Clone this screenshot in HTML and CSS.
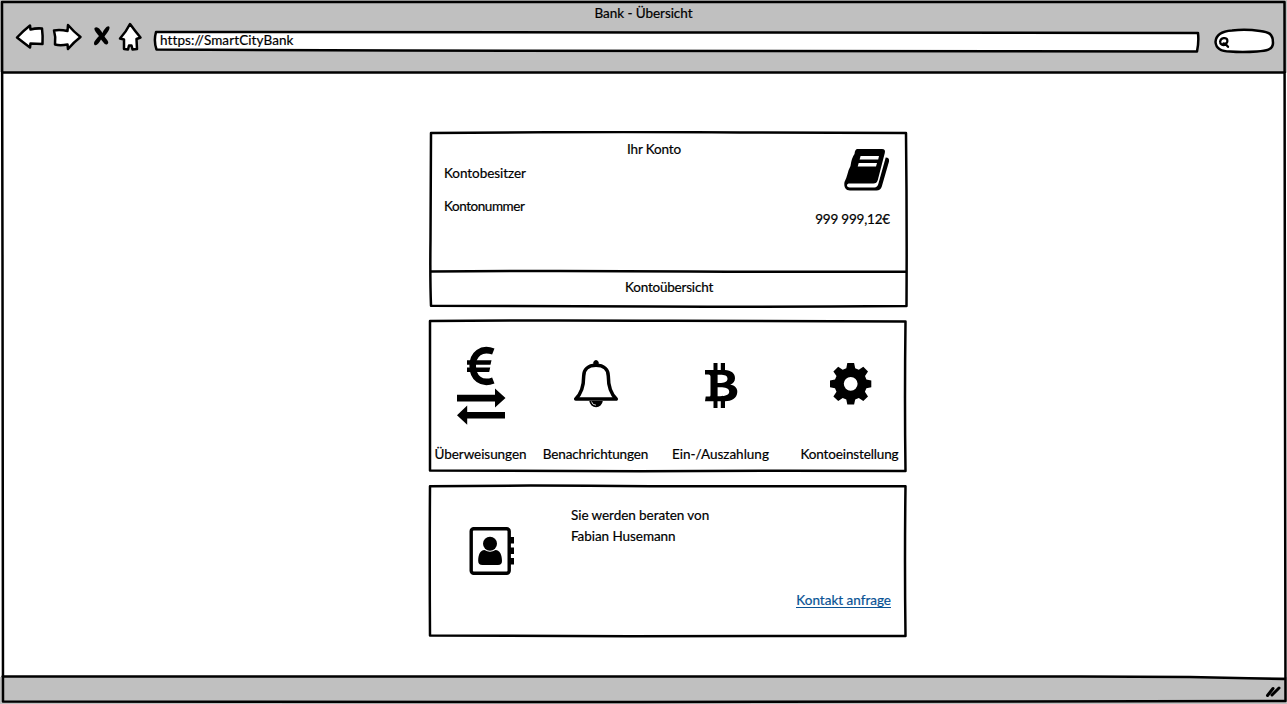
FILE: index.html
```html
<!DOCTYPE html>
<html lang="de">
<head>
<meta charset="utf-8">
<title>Bank - Übersicht</title>
<link rel="stylesheet" href="styles.css">
</head>
<body>
<div class="window">
  <header class="chrome">
    <div class="title"><span class="t-title">Bank - Übersicht</span></div>
    <div class="toolbar">
      <svg class="nav" viewBox="12 20 134 34">
        <g class="sketch white">
          <path d="M17 37.5Q23 31 30 25.500L30.500 29.500Q36 28 42 28.500Q43 36 42.500 44Q36 43.500 30.500 43.500L30 47.500Q24 43 17 37.500Z"/>
          <path d="M54 30.500Q60 29.500 67.500 31L68 25Q74 32 80.500 37Q74 42 68 49L67.500 44.500Q60 46 55 44.500Q56 37 54 30.500Z"/>
          <path d="M130 24Q135 31 140.500 37.500L136.500 39L137 49L132.500 49.500L131.500 45.500L129 45.500L128 49.500L124 49L124 39.500L120 38.500Q126 32 130 24Z"/>
        </g>
        <path d="M94.500 28C98 25.500 101 31 102.500 33C104 29 108 24.500 109.500 27C110 30 106 34 104.500 36.500C106 39 110 42 107.500 44C105 46 103 41.500 101 39.500C99 43 96.500 46.500 94.500 45C92.500 42 97.500 38 99 36C96.500 33 94 30.500 94.500 28Z"/>
      </svg>
      <div class="address">
        <svg class="outline" viewBox="152 29 1049 25"><path class="sketch white" d="M156 32Q400 31.500 650 32.500L1198 33Q1199 42 1197 51.500L1000 51.300Q600 51.200 400 50.500L156.500 49.500Q153.500 41 156 32Z"/></svg>
        <span class="t-url">https://SmartCityBank</span>
      </div>
      <svg class="search" viewBox="1212 27 66 28">
        <path class="sketch white" d="M1215.500 42C1216 34 1224 31 1232 30.500Q1246 29 1260 31C1268 32 1273 33 1273 43C1273 50 1266 51 1257 51.500Q1242 52.500 1230 51.500C1221 51.500 1216 48 1215.500 42Z"/>
        <path class="lens" d="M1226 44.500C1222.500 46 1219.800 44 1220.200 41.500C1220.500 37.500 1226.500 37 1227.300 40C1228 42.800 1225.500 45 1223.500 43.500M1225 43.500L1228 46.800"/>
      </svg>
    </div>
  </header>

  <main class="page">
    <section class="card account">
      <svg class="outline" viewBox="428 131 480 177"><path class="sketch" d="M431 133Q600 131.500 740 132.500L906 133Q907 220 906.500 306Q760 307 650 306.500L431 305.800Q430 280 430.500 240ZM431 271.500Q560 270.500 690 271.500Q800 272 906 271.500"/></svg>
      <div class="account-body">
        <div class="owner"><span class="t-owner">Kontobesitzer</span><span class="t-number">Kontonummer</span></div>
        <div class="heading"><span class="t-heading">Ihr Konto</span></div>
        <div class="balance">
          <svg class="book" viewBox="843 147 48 46">
            <path d="M857.500 149H882Q885.800 149 884.800 153L877.800 180Q876.800 183.500 873.500 183.500H848.500Q846.500 184 847 186Q847.600 187.400 849.500 187.400H874.500Q877.300 187.400 878.300 184L885.700 157.500Q889.700 157.500 889 161.500L881.800 186.500Q880.600 190.500 876.500 190.500H850C846 190.500 843.500 187 844.500 182Q846.500 178 847.500 174Q848.800 169 850.500 166Q851.500 158 854.500 154Q855 149 857.500 149Z"/>
            <path class="page-line" d="M860.600 156H879L878.200 159.600H859.600ZM858.700 163H877L876 166.600H857.700Z"/>
          </svg>
          <span class="t-balance">999 999,12€</span>
        </div>
      </div>
      <div class="account-link"><span class="t-overview">Kontoübersicht</span></div>
    </section>

    <section class="card services">
      <svg class="outline" viewBox="428 319 480 154"><path class="sketch" d="M430 321Q540 320 670 320.800L905.500 321.500Q904.500 400 905.500 471Q760 470.500 640 471.200L430 470.500Q430 390 430 321Z"/></svg>
      <div class="service">
        <svg class="pic" viewBox="450 340 62 92">
          <path class="euro" d="M493.300 351.500C481.500 347 472.700 354 472.700 366C472.700 378 481.500 385 493.300 380.500"/>
          <path d="M467 360.200H491.500L490.500 364.700H467ZM467 367.500H490.200L489.200 372H467Z"/>
          <path d="M457 394.800H495V388.500L505.500 398L495 407.500V401.500H457ZM505 412H467.200V405.500L457 415.200L467.200 424.800V418.500H505Z"/>
        </svg>
        <span class="t-transfer">Überweisungen</span>
      </div>
      <div class="service">
        <svg class="pic" viewBox="565 340 62 92">
          <path d="M593.300 365V362Q596 358 598.700 362V365ZM589.300 401A6.800 7 0 0 0 602.800 401Z"/>
          <path class="bell" d="M575.700 399C581 394 583.700 387 583.700 376C583.700 369.500 588 365.300 596 365.300C604 365.300 608.300 369.500 608.300 376C608.300 387 611 394 616.300 399Z"/>
          <path class="shine" d="M591.500 401.500Q592 405 596 405.200"/>
        </svg>
        <span class="t-notify">Benachrichtungen</span>
      </div>
      <div class="service">
        <svg class="pic" viewBox="690 340 62 92">
          <path fill-rule="evenodd" d="M705 370H713.500V363H717.500V370H720.800V363H725V370C731 370.500 735 373 735 378.200C735 381.500 733 383.500 730.200 384.600C735 385.600 737.500 388.500 737.300 392C737 398.500 731.500 401 725 401.300V408H720.800V401.300H717.500V408H713.500V401.300H705L705.700 396.500H709.500Q710.500 396.500 710.500 395V376.500Q710.500 374.600 708.500 374.600H705ZM717.600 374.800V383C723.500 383.300 727.500 382.200 727.500 378.700C727.500 375 723.500 374.500 717.600 374.800ZM717.600 387.200V396.200C724.500 396.600 729.200 395.500 729.200 391.600C729.200 387.500 724 386.900 717.600 387.200Z"/>
        </svg>
        <span class="t-cash">Ein-/Auszahlung</span>
      </div>
      <div class="service">
        <svg class="pic" viewBox="819 340 62 92">
          <path fill-rule="evenodd" d="M847.300 363H854.100L855.200 368.200L858.800 369.700L863.300 366.700L868 371.400L865 376L866.400 379.400L871.300 380.400V387.200L866.400 388.300L864.900 391.800L868 396.400L863.300 401L858.800 398L855.200 399.400L854.100 404.500H847.300L846.300 399.400L842.700 398L838.200 401L833.400 396.400L836.500 391.800L835 388.300L830 387.200V380.400L835 379.400L836.500 376L833.400 371.400L838.200 366.700L842.700 369.700L846.300 368.200ZM850.700 376.900A6.900 6.900 0 1 0 850.700 390.700A6.900 6.900 0 1 0 850.700 376.900Z"/>
        </svg>
        <span class="t-settings">Kontoeinstellung</span>
      </div>
    </section>

    <section class="card adviser">
      <svg class="outline" viewBox="428 484 480 154"><path class="sketch" d="M430 486.200Q530 485 650 486.300L905.500 486.200Q904.500 560 905.500 636Q760 635.500 630 636.200L430 635.500Q429.500 560 430 486.200Z"/></svg>
      <svg class="contact" viewBox="466 524 52 54">
        <rect class="cover" x="471.200" y="528.700" width="38" height="44.600" rx="2.500"/>
        <path d="M509 537H514V543.500H509ZM509 547.500H514V554H509ZM509 558H514V564.500H509Z"/>
        <circle cx="490" cy="543.800" r="7"/>
        <path d="M484.500 550Q490 553.500 495.500 550C500 550 502 555 502 561Q502 565 498 565H482.500Q478.200 565 478.200 561C478.200 555 480 550 484.500 550Z"/>
      </svg>
      <div class="adviser-text"><span class="t-advice">Sie werden beraten von</span><span class="t-name">Fabian Husemann</span></div>
      <a class="request" href="#"><span class="t-request">Kontakt anfrage</span></a>
    </section>
  </main>

  <footer class="status">
    <svg class="grip" viewBox="1262 682 22 18"><path d="M1267.500 695.500L1273 688.500M1272 695L1279 688"/></svg>
  </footer>

  <svg class="outline" viewBox="0 0 1287 704">
    <path class="sketch" d="M2 2Q500 1.500 1284.500 2Q1285.500 200 1285 400L1285.500 701Q900 703 640 702L3 701.500Q2 500 2.500 260ZM2.500 72.500Q500 71.500 800 72.500L1285 72.500M2.500 676.500Q120 677 240 676.500Q700 675.500 1080 676.500L1190 677L1285 679"/>
  </svg>
</div>
</body>
</html>
```
FILE: styles.css
```css
* { box-sizing: border-box; }
body { margin: 0; background: #fff; font-family: Lato, "Noto Sans", sans-serif; font-size: 13.5px; line-height: 18px; color: #000; }
span { white-space: nowrap; -webkit-text-stroke: .2px currentColor; }
svg { display: block; flex: none; }

.window { position: relative; width: 1287px; height: 704px; display: flex; flex-direction: column; overflow: hidden; }
.outline { position: absolute; inset: 0; width: 100%; height: 100%; pointer-events: none; }
.sketch { fill: none; stroke: #000; stroke-width: 2.5; stroke-linejoin: round; stroke-linecap: round; }
.white { fill: #fff; }

.chrome { height: 72px; background: #c0c0c0; padding-top: 4px; }
.title { display: flex; justify-content: center; height: 16px; }
.toolbar { display: flex; padding-left: 12px; }
.nav { width: 134px; height: 34px; }
.address { position: relative; width: 1049px; height: 25px; margin: 9px 11px 0 6px; padding: 2px 0 0 8px; }
.address span { position: relative; }
.search { width: 66px; height: 28px; margin-top: 7px; }
.lens { fill: none; stroke: #000; stroke-width: 2.3; stroke-linecap: round; }

.t-title { letter-spacing: -.06px; }
.t-url { letter-spacing: .1px; }
.t-heading { letter-spacing: -.15px; }
.t-owner { letter-spacing: -.06px; }
.t-number { letter-spacing: -.45px; }
.t-balance { letter-spacing: -.2px; }
.t-overview { letter-spacing: -.2px; }
.t-transfer { letter-spacing: -.06px; }
.t-notify, .t-settings { letter-spacing: -.13px; }
.t-advice, .t-name { letter-spacing: -.06px; }

.page { flex: 1; padding: 59px 0 0 428px; display: flex; flex-direction: column; gap: 11px; }
.card { position: relative; width: 480px; }

.account { height: 177px; }
.account-body { display: flex; height: 140px; padding: 0 18px 0 16px; }
.owner { width: 183px; display: flex; flex-direction: column; align-items: flex-start; gap: 15px; padding-top: 33px; }
.heading { flex: 1; padding-top: 9px; }
.balance { display: flex; flex-direction: column; align-items: flex-end; gap: 17px; padding-top: 16px; }
.book { width: 48px; height: 46px; margin-right: -1px; }
.page-line { fill: #fff; }
.account-link { display: flex; justify-content: center; padding: 7px 0 0 2px; }

.services { height: 154px; display: flex; }
.service { width: 125px; padding-top: 21px; display: flex; flex-direction: column; align-items: center; gap: 13px; }
.service:nth-of-type(1) { width: 105px; }
.service:nth-of-type(4) { width: 117px; margin-left: 8px; }
.pic { width: 62px; height: 92px; }
.euro { fill: none; stroke: #000; stroke-width: 6.6; }
.bell { fill: #fff; stroke: #000; stroke-width: 3.5; stroke-linejoin: round; }
.shine { fill: none; stroke: #fff; stroke-width: .8; }

.adviser { height: 154px; display: flex; padding: 22px 17px 0 38px; }
.contact { width: 52px; height: 54px; margin-top: 18px; }
.cover { fill: #fff; stroke: #000; stroke-width: 3.4; }
.adviser-text { display: flex; flex-direction: column; align-items: flex-start; gap: 3px; margin-left: 53px; flex: 1; }
.request { align-self: flex-start; margin-top: 85px; color: #0a5395; text-decoration: none; height: 17px; border-bottom: 1px solid #0a5395; }

.status { height: 27px; background: #c0c0c0; display: flex; justify-content: flex-end; padding: 5px 3px 0 0; }
.grip { width: 22px; height: 18px; fill: none; stroke: #000; stroke-width: 3; stroke-linecap: round; }
```
